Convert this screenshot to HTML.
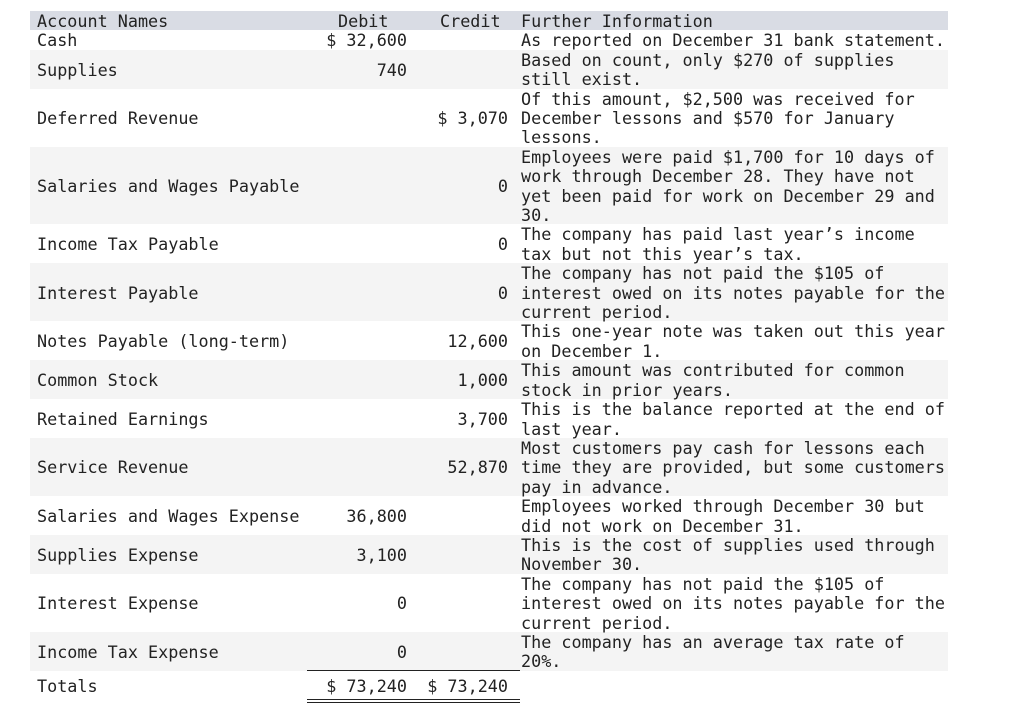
<!DOCTYPE html>
<html><head><meta charset="utf-8"><style>
body{margin:0;width:1024px;height:713px;background:#fff;position:relative;overflow:hidden;font-family:"DejaVu Sans Mono","Liberation Mono",monospace;font-size:16.78px;color:#222;}
#w{position:absolute;left:0;top:1px;width:1024px;height:712px}
.bg{position:absolute;left:30px;width:918px;background:#f4f4f4}
.t{position:absolute;white-space:pre;line-height:19.4px;height:19.4px}
.r{text-align:right}
.hl{position:absolute;background:#222;height:1px}
</style></head><body><div id="w">
<div class="bg" style="top:10px;height:19.4px;background:#d9dce4"></div>
<div class="bg" style="top:48.8px;height:38.8px"></div>
<div class="bg" style="top:145.8px;height:77.6px"></div>
<div class="bg" style="top:262.2px;height:58.2px"></div>
<div class="bg" style="top:359.2px;height:38.8px"></div>
<div class="bg" style="top:436.8px;height:58.2px"></div>
<div class="bg" style="top:533.8px;height:38.8px"></div>
<div class="bg" style="top:630.8px;height:38.8px"></div>

<div class="t" style="left:37px;top:11px">Account Names</div>
<div class="t" style="left:338px;top:11px">Debit</div>
<div class="t" style="left:440px;top:11px">Credit</div>
<div class="t" style="left:521px;top:11px">Further Information</div>

<div class="t" style="left:37px;top:30.4px">Cash</div>
<div class="t" style="left:37px;top:59.5px">Supplies</div>
<div class="t" style="left:37px;top:108.1px">Deferred Revenue</div>
<div class="t" style="left:37px;top:176px">Salaries and Wages Payable</div>
<div class="t" style="left:37px;top:234.2px">Income Tax Payable</div>
<div class="t" style="left:37px;top:282.7px">Interest Payable</div>
<div class="t" style="left:37px;top:331.2px">Notes Payable (long-term)</div>
<div class="t" style="left:37px;top:370px">Common Stock</div>
<div class="t" style="left:37px;top:408.8px">Retained Earnings</div>
<div class="t" style="left:37px;top:457.3px">Service Revenue</div>
<div class="t" style="left:37px;top:505.8px">Salaries and Wages Expense</div>
<div class="t" style="left:37px;top:544.6px">Supplies Expense</div>
<div class="t" style="left:37px;top:593.1px">Interest Expense</div>
<div class="t" style="left:37px;top:641.6px">Income Tax Expense</div>
<div class="t" style="left:37px;top:676px">Totals</div>

<div class="t r" style="right:617px;top:30.4px">$ 32,600</div>
<div class="t r" style="right:617px;top:59.5px">740</div>
<div class="t r" style="right:617px;top:505.8px">36,800</div>
<div class="t r" style="right:617px;top:544.6px">3,100</div>
<div class="t r" style="right:617px;top:593.1px">0</div>
<div class="t r" style="right:617px;top:641.6px">0</div>
<div class="t r" style="right:617px;top:676px">$ 73,240</div>

<div class="t r" style="right:516px;top:108.1px">$ 3,070</div>
<div class="t r" style="right:516px;top:176px">0</div>
<div class="t r" style="right:516px;top:234.2px">0</div>
<div class="t r" style="right:516px;top:282.7px">0</div>
<div class="t r" style="right:516px;top:331.2px">12,600</div>
<div class="t r" style="right:516px;top:370px">1,000</div>
<div class="t r" style="right:516px;top:408.8px">3,700</div>
<div class="t r" style="right:516px;top:457.3px">52,870</div>
<div class="t r" style="right:516px;top:676px">$ 73,240</div>

<div class="t" style="left:521px;top:30.4px;height:auto">As reported on December 31 bank statement.
Based on count, only $270 of supplies
still exist.
Of this amount, $2,500 was received for
December lessons and $570 for January
lessons.
Employees were paid $1,700 for 10 days of
work through December 28. They have not
yet been paid for work on December 29 and
30.
The company has paid last year’s income
tax but not this year’s tax.
The company has not paid the $105 of
interest owed on its notes payable for the
current period.
This one-year note was taken out this year
on December 1.
This amount was contributed for common
stock in prior years.
This is the balance reported at the end of
last year.
Most customers pay cash for lessons each
time they are provided, but some customers
pay in advance.
Employees worked through December 30 but
did not work on December 31.
This is the cost of supplies used through
November 30.
The company has not paid the $105 of
interest owed on its notes payable for the
current period.
The company has an average tax rate of
20%.</div>

<div class="hl" style="left:307px;width:213px;top:669px"></div>
<div class="hl" style="left:307px;width:213px;top:698px"></div>
<div class="hl" style="left:307px;width:213px;top:701px"></div>
</div></body></html>
